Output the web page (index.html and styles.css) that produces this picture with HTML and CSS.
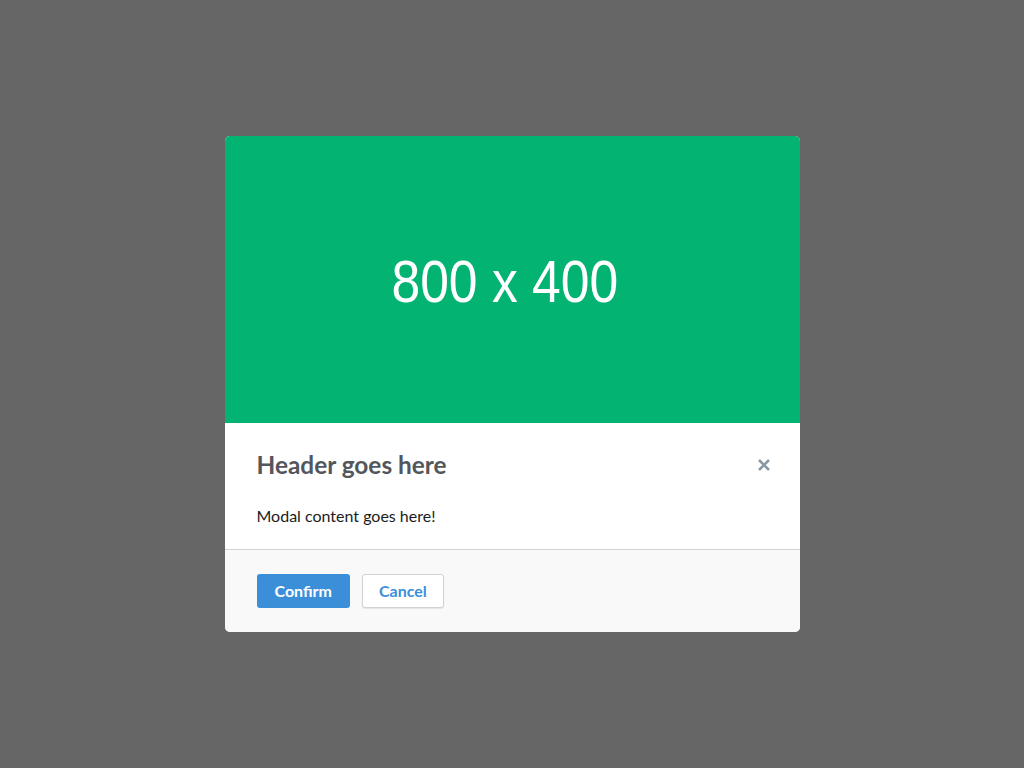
FILE: index.html
```html
<!DOCTYPE html>
<html lang="en">
<head>
<meta charset="utf-8">
<title>Modal</title>
<link rel="stylesheet" href="styles.css">
</head>
<body>
<div class="overlay">
  <div class="modal">
    <div class="modal-image"><span class="image-label">800 x 400</span></div>
    <div class="modal-header">
      <h2 class="modal-title">Header goes here</h2>
      <button class="close" aria-label="Close">
        <svg width="14" height="14" viewBox="0 0 14 14"><path d="M2 2 L12 12 M12 2 L2 12" stroke="#8797a4" stroke-width="2.6" stroke-linecap="butt"/></svg>
      </button>
    </div>
    <div class="modal-body">Modal content goes here!</div>
    <div class="modal-footer">
      <button class="btn btn-primary">Confirm</button>
      <button class="btn btn-default">Cancel</button>
    </div>
  </div>
</div>
</body>
</html>
```
FILE: styles.css
```css
html, body {
  margin: 0;
  height: 100%;
}
body {
  background: #666666;
  font-family: Lato, "Open Sans", sans-serif;
}
.overlay {
  height: 100%;
  display: flex;
  align-items: center;
  justify-content: center;
}
.modal {
  width: 575px;
  background: #ffffff;
  border-radius: 5px;
  overflow: hidden;
}
.modal-image {
  height: 287px;
  background: #02b372;
  display: flex;
  align-items: center;
  justify-content: center;
  padding-right: 14px;
  padding-top: 3px;
  box-sizing: border-box;
}
.image-label {
  display: inline-block;
  color: #ffffff;
  font-family: "Liberation Sans", Arial, sans-serif;
  font-size: 60px;
  transform: scaleX(0.86);
}
.modal-header {
  display: flex;
  align-items: center;
  justify-content: space-between;
  padding: 28px 29px 0 32px;
}
.modal-title {
  margin: 0;
  font-size: 24.4px;
  line-height: 28px;
  font-weight: 700;
  color: #53575c;
}
.close {
  border: 0;
  background: none;
  padding: 0;
  width: 14px;
  height: 14px;
  display: block;
  cursor: pointer;
}
.close svg { display: block; }
.modal-body {
  padding: 25px 32px 21px;
  font-size: 16px;
  line-height: 24px;
  color: #1b1c1d;
}
.modal-footer {
  border-top: 1px solid #d4d4d5;
  background: #f9f9f9;
  padding: 24px 32px;
  display: flex;
  gap: 12px;
}
.btn {
  font-family: Lato, "Open Sans", sans-serif;
  font-size: 16px;
  font-weight: 700;
  line-height: 20px;
  border-radius: 3px;
  cursor: pointer;
}
.btn-primary {
  background: #3b8fd9;
  color: #ffffff;
  border: 0;
  padding: 7px 18px;
}
.btn-default {
  background: #ffffff;
  color: #3b8fd9;
  border: 1px solid #d0d3d6;
  padding: 6px 16px;
  box-shadow: 0 1px 1px rgba(0,0,0,0.08);
}
```
